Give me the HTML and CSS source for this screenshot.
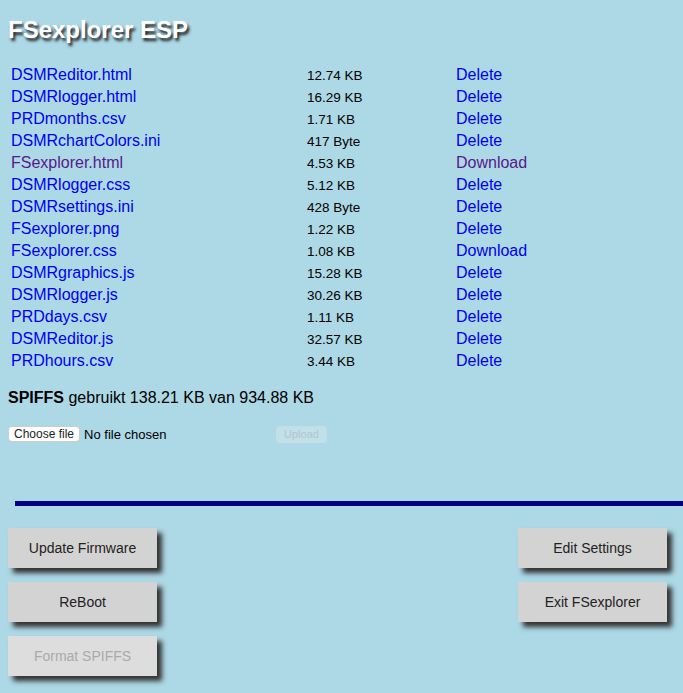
FILE: index.html
```html
<!DOCTYPE html>
<html lang="en">
<head>
    <meta charset="UTF-8">
    <title>FSexplorer ESP</title>
    <link rel="stylesheet" href="styles.css">
</head>
<body>
<div class="page">
    <h1 class="title">FSexplorer ESP</h1>
    <table class="files">
        <tr><td class="name"><a href="#">DSMReditor.html</a></td><td class="size">12.74 KB</td><td><a href="#">Delete</a></td></tr>
        <tr><td class="name"><a href="#">DSMRlogger.html</a></td><td class="size">16.29 KB</td><td><a href="#">Delete</a></td></tr>
        <tr><td class="name"><a href="#">PRDmonths.csv</a></td><td class="size">1.71 KB</td><td><a href="#">Delete</a></td></tr>
        <tr><td class="name"><a href="#">DSMRchartColors.ini</a></td><td class="size">417 Byte</td><td><a href="#">Delete</a></td></tr>
        <tr><td class="name"><a href="#" class="visited">FSexplorer.html</a></td><td class="size">4.53 KB</td><td><a href="#" class="visited">Download</a></td></tr>
        <tr><td class="name"><a href="#">DSMRlogger.css</a></td><td class="size">5.12 KB</td><td><a href="#">Delete</a></td></tr>
        <tr><td class="name"><a href="#">DSMRsettings.ini</a></td><td class="size">428 Byte</td><td><a href="#">Delete</a></td></tr>
        <tr><td class="name"><a href="#">FSexplorer.png</a></td><td class="size">1.22 KB</td><td><a href="#">Delete</a></td></tr>
        <tr><td class="name"><a href="#">FSexplorer.css</a></td><td class="size">1.08 KB</td><td><a href="#">Download</a></td></tr>
        <tr><td class="name"><a href="#">DSMRgraphics.js</a></td><td class="size">15.28 KB</td><td><a href="#">Delete</a></td></tr>
        <tr><td class="name"><a href="#">DSMRlogger.js</a></td><td class="size">30.26 KB</td><td><a href="#">Delete</a></td></tr>
        <tr><td class="name"><a href="#">PRDdays.csv</a></td><td class="size">1.11 KB</td><td><a href="#">Delete</a></td></tr>
        <tr><td class="name"><a href="#">DSMReditor.js</a></td><td class="size">32.57 KB</td><td><a href="#">Delete</a></td></tr>
        <tr><td class="name"><a href="#">PRDhours.csv</a></td><td class="size">3.44 KB</td><td><a href="#">Delete</a></td></tr>
    </table>
    <p class="usage"><b>SPIFFS</b> gebruikt 138.21 KB van 934.88 KB</p>
    <form class="upload">
        <label class="pick">
            <input type="file" name="upload" hidden>
            <span class="pick-btn">Choose file</span>
            <span class="pick-name">No file chosen</span>
        </label>
        <input type="submit" class="send" value="Upload" disabled>
    </form>
    <div class="bar"></div>
    <div class="actions">
        <div class="col">
            <button class="action">Update Firmware</button>
            <button class="action">ReBoot</button>
            <button class="action" disabled>Format SPIFFS</button>
        </div>
        <div class="col">
            <button class="action">Edit Settings</button>
            <button class="action">Exit FSexplorer</button>
        </div>
    </div>
</div>
</body>
</html>
```

FILE: styles.css
```css
body {
    font-family: "Liberation Sans", Arial, sans-serif;
    background-color: lightblue;
    margin: 0;
}
.page {
    padding: 8px 0 20px 8px;
}
.title {
    font-size: 24px;
    color: white;
    text-shadow: 2px 3px 3px #222;
    margin: 8px 0 19px 0;
}
.files td {
    font-size: 16px;
    padding: 1px;
}
.files td.name {
    width: 292px;
}
.files td.size {
    width: 145px;
    font-size: 13.5px;
}
.files a {
    color: #0000ee;
    text-decoration: none;
}
.files a.visited {
    color: #551a8b;
}
.usage {
    font-size: 16px;
    margin: 16px 0 18px 0;
}
.upload {
    display: flex;
    align-items: center;
    height: 18px;
}
.pick {
    display: flex;
    align-items: center;
    width: 268px;
    font-size: 13px;
}
.pick-btn {
    box-sizing: border-box;
    height: 16px;
    line-height: 14px;
    padding: 0 5px;
    font-size: 12px;
    color: #222;
    background-color: white;
    border: 1px solid #ccc;
    border-radius: 4px;
    margin-right: 4px;
}
.send {
    box-sizing: border-box;
    width: 51px;
    height: 17px;
    padding: 0;
    font-family: "Liberation Sans", Arial, sans-serif;
    font-size: 11px;
    color: #b5c4c9;
    background-color: #c0e0ea;
    border: 1px solid #c6dde4;
    border-radius: 3px;
}
.bar {
    height: 5px;
    background-color: navy;
    margin: 58px 0 22px 7px;
}
.actions {
    display: flex;
    justify-content: space-between;
    padding-right: 16px;
}
.col {
    display: flex;
    flex-direction: column;
    gap: 14px;
}
.action {
    width: 149px;
    height: 40px;
    font-family: "Liberation Sans", Arial, sans-serif;
    font-size: 14px;
    color: #222;
    background-color: lightgray;
    border: none;
    box-shadow: 5px 5px 5px #333;
}
.action:disabled {
    color: #aaa;
    background-color: #ddd;
}
```
